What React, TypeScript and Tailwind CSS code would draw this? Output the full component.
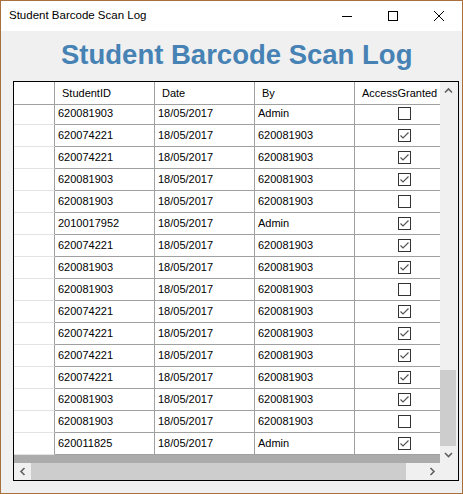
import React from "react";

type Row = { id: string; by: string; ok: boolean };

const rows: Row[] = [
  { id: "620081903", by: "Admin", ok: false },
  { id: "620074221", by: "620081903", ok: true },
  { id: "620074221", by: "620081903", ok: true },
  { id: "620081903", by: "620081903", ok: true },
  { id: "620081903", by: "620081903", ok: false },
  { id: "2010017952", by: "Admin", ok: true },
  { id: "620074221", by: "620081903", ok: true },
  { id: "620081903", by: "620081903", ok: true },
  { id: "620081903", by: "620081903", ok: false },
  { id: "620074221", by: "620081903", ok: true },
  { id: "620074221", by: "620081903", ok: true },
  { id: "620074221", by: "620081903", ok: true },
  { id: "620074221", by: "620081903", ok: true },
  { id: "620081903", by: "620081903", ok: true },
  { id: "620081903", by: "620081903", ok: false },
  { id: "620011825", by: "Admin", ok: true },
];

function CheckBox({ checked }: { checked: boolean }) {
  return (
    <svg width="13" height="13" viewBox="0 0 13 13">
      <rect x="0.5" y="0.5" width="12" height="12" fill="#fff" stroke="#333" strokeWidth="1" />
      {checked && (
        <polyline points="2.5,6.5 5,9 10.5,3.5" fill="none" stroke="#555" strokeWidth="1.2" />
      )}
    </svg>
  );
}

function Chevron({ dir }: { dir: "up" | "down" | "left" | "right" }) {
  const d =
    dir === "up"
      ? "M1 5.5 L4.5 2 L8 5.5"
      : dir === "down"
      ? "M1 2 L4.5 5.5 L8 2"
      : dir === "left"
      ? "M5.5 1 L2 4.5 L5.5 8"
      : "M2.5 1 L6 4.5 L2.5 8";
  const w = dir === "up" || dir === "down" ? 9 : 8;
  const h = dir === "up" || dir === "down" ? 8 : 9;
  return (
    <svg width={w} height={h} viewBox={`0 0 ${w} ${h}`}>
      <path d={d} fill="none" stroke="#606060" strokeWidth="1.6" />
    </svg>
  );
}

export default function App() {
  return (
    <div className="w-[463px] h-[494px] border border-[#a86f3f] flex flex-col bg-[#f0f0f0] overflow-hidden font-['Liberation_Sans',Arial,sans-serif]">
      {/* Title bar */}
      <div className="h-[30px] shrink-0 bg-white flex items-center">
        <span className="flex-1 pl-[8px] text-[11.5px] text-black">Student Barcode Scan Log</span>
        <div className="w-[46px] h-[30px] flex items-center justify-center">
          <svg width="10" height="10" viewBox="0 0 10 10">
            <line x1="0" y1="5.5" x2="10" y2="5.5" stroke="#000" strokeWidth="1" />
          </svg>
        </div>
        <div className="w-[46px] h-[30px] flex items-center justify-center">
          <svg width="10" height="10" viewBox="0 0 10 10">
            <rect x="0.5" y="0.5" width="9" height="9" fill="none" stroke="#000" strokeWidth="1" />
          </svg>
        </div>
        <div className="w-[46px] h-[30px] flex items-center justify-center">
          <svg width="10" height="10" viewBox="0 0 10 10">
            <path d="M0 0 L10 10 M10 0 L0 10" stroke="#000" strokeWidth="1" />
          </svg>
        </div>
      </div>

      {/* Client */}
      <div className="flex-1 flex flex-col">
        <div className="pt-[10px] pl-[60px]">
          <div className="h-[28px] leading-[28px] text-[27.5px] font-bold text-[#4682b4] whitespace-nowrap">
            Student Barcode Scan Log
          </div>
        </div>

        <div className="mt-[12px] ml-[12px] w-[446px] h-[400px] border border-black flex flex-col text-[11px] text-black">
          <div className="h-[381px] flex">
            {/* data area */}
            <div className="w-[426px] flex flex-col overflow-hidden">
              <div className="h-[23px] shrink-0 flex bg-white border-b border-[#a0a0a0]">
                <div className="w-[41px] shrink-0 border-r border-[#a0a0a0]" />
                {["StudentID", "Date", "By", "AccessGranted"].map((h) => (
                  <div
                    key={h}
                    className="w-[100px] shrink-0 border-r border-[#a0a0a0] pl-[7px] flex items-center whitespace-nowrap"
                  >
                    {h}
                  </div>
                ))}
              </div>
              <div className="h-[350px] shrink-0 overflow-hidden bg-white">
                <div className="-mt-[2px]">
                  {rows.map((r, i) => (
                    <div key={i} className="h-[22px] flex">
                      <div className="w-[41px] shrink-0 border-r border-b border-r-[#a0a0a0] border-b-[#e3e3e3]" />
                      <div className="w-[100px] shrink-0 border-r border-b border-[#a0a0a0] pl-[3px] flex items-center">
                        {r.id}
                      </div>
                      <div className="w-[100px] shrink-0 border-r border-b border-[#a0a0a0] pl-[3px] flex items-center">
                        18/05/2017
                      </div>
                      <div className="w-[100px] shrink-0 border-r border-b border-[#a0a0a0] pl-[3px] flex items-center">
                        {r.by}
                      </div>
                      <div className="w-[100px] shrink-0 border-r border-b border-[#a0a0a0] flex items-center justify-center">
                        <CheckBox checked={r.ok} />
                      </div>
                    </div>
                  ))}
                </div>
              </div>
              <div className="flex-1 bg-[#ababab]" />
            </div>
            {/* vertical scrollbar */}
            <div className="w-[18px] flex flex-col bg-[#f0f0f0]">
              <div className="h-[17px] flex items-center justify-center pr-[1px]">
                <Chevron dir="up" />
              </div>
              <div className="flex-1" />
              <div className="h-[76px] w-[16px] bg-[#cdcdcd]" />
              <div className="h-[17px] flex items-center justify-center pr-[1px]">
                <Chevron dir="down" />
              </div>
            </div>
          </div>
          <div className="h-[17px] flex">
            <div className="w-[426px] flex bg-[#f0f0f0]">
              <div className="w-[17px] flex items-center justify-center">
                <Chevron dir="left" />
              </div>
              <div className="w-[375px] bg-[#cdcdcd]" />
              <div className="flex-1" />
              <div className="w-[17px] flex items-center justify-center">
                <Chevron dir="right" />
              </div>
            </div>
            <div className="w-[18px] bg-[#f0f0f0]" />
          </div>
        </div>
      </div>
    </div>
  );
}
